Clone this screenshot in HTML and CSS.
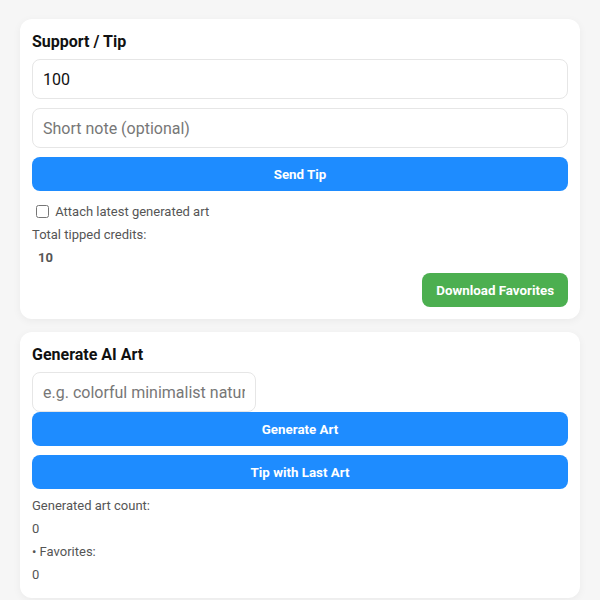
FILE: index.html
```html
<!DOCTYPE html>
<html lang="en">
<head>
<meta charset="utf-8">
<title>Support / Tip</title>
<link rel="stylesheet" href="styles.css">
</head>
<body>
<main class="page">
  <section class="card">
    <h2 class="card-title">Support / Tip</h2>
    <input class="field" type="text" value="100">
    <input class="field" type="text" placeholder="Short note (optional)">
    <button class="btn btn-blue">Send Tip</button>
    <label class="check-row"><input class="check" type="checkbox"> Attach latest generated art</label>
    <div class="line">Total tipped credits:</div>
    <div class="line value">10</div>
    <div class="actions">
      <button class="btn btn-green">Download Favorites</button>
    </div>
  </section>

  <section class="card">
    <h2 class="card-title">Generate AI Art</h2>
    <input class="field field-short" type="text" placeholder="e.g. colorful minimalist nature">
    <button class="btn btn-blue">Generate Art</button>
    <button class="btn btn-blue">Tip with Last Art</button>
    <div class="stats">
      <div class="line">Generated art count:</div>
      <div class="line">0</div>
      <div class="line">• Favorites:</div>
      <div class="line">0</div>
    </div>
  </section>
</main>
</body>
</html>
```

FILE: styles.css
```css
* {
  box-sizing: border-box;
}

html, body {
  margin: 0;
  padding: 0;
  background: #f6f6f6;
}

body {
  font-family: Roboto, "Liberation Sans", Arial, sans-serif;
  color: #111;
}

.page {
  padding: 19px 20px;
  display: flex;
  flex-direction: column;
  gap: 13px;
}

.card {
  background: #fff;
  border-radius: 12px;
  padding: 12px;
  box-shadow: 0 2px 8px rgba(0, 0, 0, 0.05);
}

.card-title {
  margin: 0 0 7px;
  font-size: 16px;
  line-height: 21px;
  font-weight: 700;
  color: #111;
}

.field {
  display: block;
  width: 100%;
  height: 40px;
  margin: 0 0 9px;
  padding: 0 10px;
  border: 1px solid #e6e6e6;
  border-radius: 8px;
  font-family: Roboto, "Liberation Sans", Arial, sans-serif;
  font-size: 16px;
  color: #111;
  background: #fff;
  outline: none;
}

.field::placeholder {
  color: #777;
}

.field-short {
  width: 224px;
  margin-bottom: 0;
}

.btn {
  display: block;
  height: 34px;
  border: none;
  border-radius: 8px;
  font-family: Roboto, "Liberation Sans", Arial, sans-serif;
  font-size: 13.333px;
  font-weight: 700;
  color: #fff;
  cursor: pointer;
}

.btn-blue {
  width: 100%;
  background: #1e8cff;
}

.btn-blue + .btn-blue {
  margin-top: 9px;
}

.btn-green {
  background: #4caf50;
  padding: 0 14px;
}

.check-row {
  display: block;
  margin-top: 9px;
  font-size: 13px;
  line-height: 23px;
  color: #555;
}

.check {
  margin: 0 3px 0 4px;
  width: 13px;
  height: 13px;
  vertical-align: -2px;
}

.line {
  font-size: 13px;
  line-height: 23px;
  color: #555;
}

.value {
  font-weight: 700;
  padding-left: 6px;
}

.actions {
  display: flex;
  justify-content: flex-end;
  margin-top: 4px;
}

.stats {
  margin-top: 5px;
}
```
